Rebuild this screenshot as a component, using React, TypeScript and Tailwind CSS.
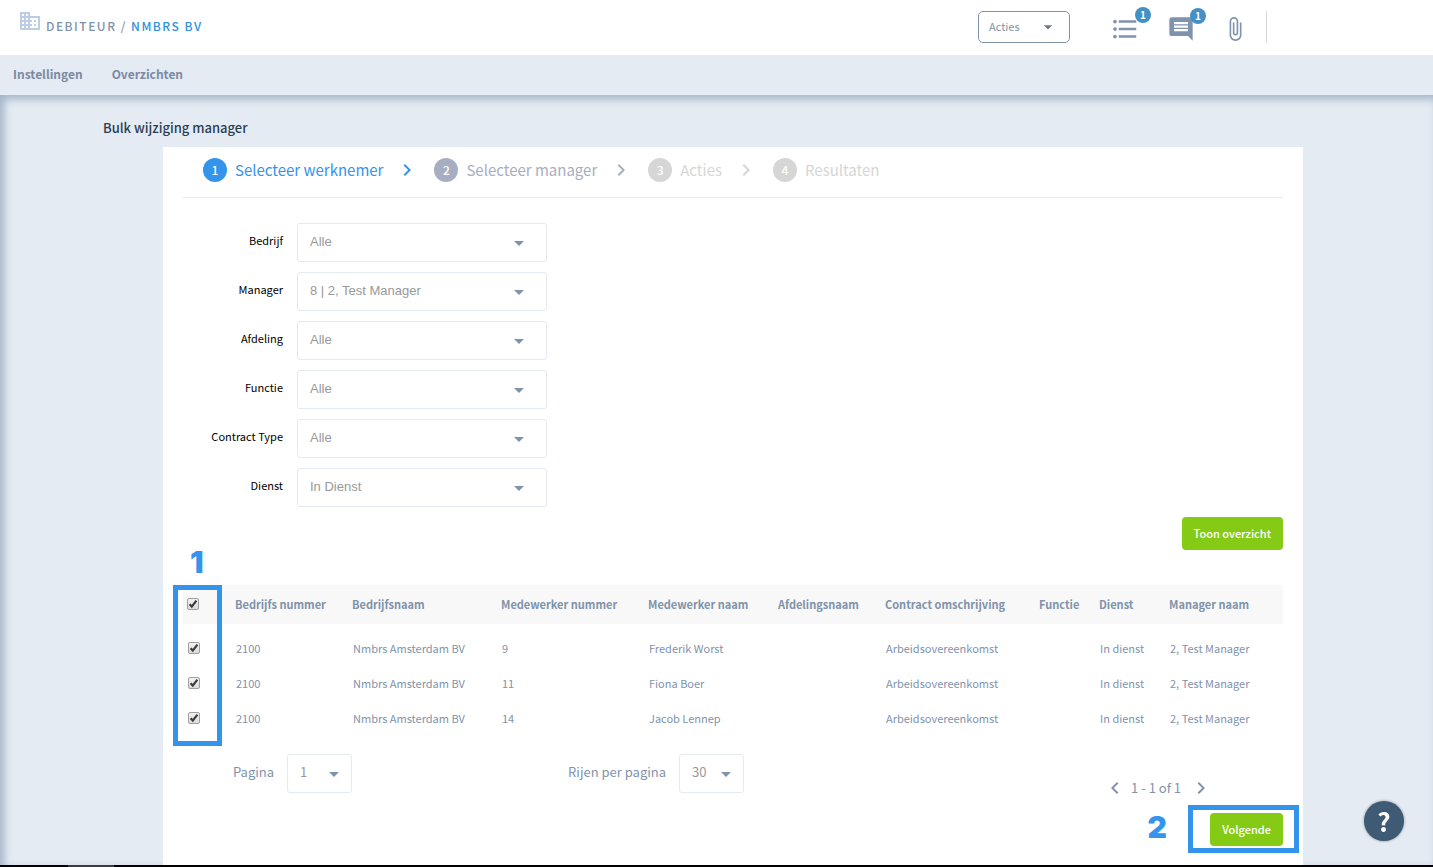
import React from "react";
import {
  MdArrowDropDown,
  MdAttachFile,
  MdBusiness,
  MdChevronLeft,
  MdChevronRight,
  MdComment,
  MdFormatListBulleted,
} from "react-icons/md";

const filters = [
  { id: "bedrijf", label: "Bedrijf", value: "Alle" },
  { id: "manager", label: "Manager", value: "8 | 2, Test Manager" },
  { id: "afdeling", label: "Afdeling", value: "Alle" },
  { id: "functie", label: "Functie", value: "Alle" },
  { id: "contract", label: "Contract Type", value: "Alle" },
  { id: "dienst", label: "Dienst", value: "In Dienst" },
];

const steps = [
  { label: "Selecteer werknemer", dot: "bg-[#3494eb]", text: "text-[#3494eb]" },
  { label: "Selecteer manager", dot: "bg-[#a7aec1]", text: "text-[#a7aec1]" },
  { label: "Acties", dot: "bg-[#d6d6d6]", text: "text-[#d6d6d6]" },
  { label: "Resultaten", dot: "bg-[#d6d6d6]", text: "text-[#d6d6d6]" },
];

const columns = [
  { label: "Bedrijfs nummer", width: "w-[117px]" },
  { label: "Bedrijfsnaam", width: "w-[149px]" },
  { label: "Medewerker nummer", width: "w-[147px]" },
  { label: "Medewerker naam", width: "w-[130px]" },
  { label: "Afdelingsnaam", width: "w-[107px]" },
  { label: "Contract omschrijving", width: "w-[154px]" },
  { label: "Functie", width: "w-[60px]" },
  { label: "Dienst", width: "w-[70px]" },
  { label: "Manager naam", width: "w-[114px]" },
];

const rows = [
  ["2100", "Nmbrs Amsterdam BV", "9", "Frederik Worst", "", "Arbeidsovereenkomst", "", "In dienst", "2, Test Manager"],
  ["2100", "Nmbrs Amsterdam BV", "11", "Fiona Boer", "", "Arbeidsovereenkomst", "", "In dienst", "2, Test Manager"],
  ["2100", "Nmbrs Amsterdam BV", "14", "Jacob Lennep", "", "Arbeidsovereenkomst", "", "In dienst", "2, Test Manager"],
];

function Tick({ label }: { label: string }) {
  return (
    <span className="relative block size-3">
      <input
        type="checkbox"
        defaultChecked
        aria-label={label}
        className="peer block size-3 appearance-none rounded-[2px] border border-[#a0a0a0] bg-linear-to-b from-[#f2f2f2] to-[#dcdcdc]"
      />
      <svg
        viewBox="0 0 12 12"
        aria-hidden="true"
        className="pointer-events-none absolute inset-0 hidden size-3 fill-none stroke-[#3c3c3c] peer-checked:block"
      >
        <path d="M2.6 6.2 4.8 8.6 9.4 2.6" strokeWidth="2.2" />
      </svg>
    </span>
  );
}

function Badge({ count }: { count: number }) {
  return (
    <span className="absolute -top-[7px] -right-[11px] flex size-4 items-center justify-center rounded-full bg-[#4390c4] text-[10px] leading-4 font-bold text-white">
      {count}
    </span>
  );
}

function PageSelect({ id, label, value }: { id: string; label: string; value: string }) {
  return (
    <div className="flex items-center">
      <label htmlFor={id} className="pb-[3px] text-[13px] leading-5">
        {label}
      </label>
      <span className="relative ml-[13px] block">
        <select
          id={id}
          className="block h-[39px] w-[65px] appearance-none rounded-[3px] border border-[#e4eaf3] bg-white pb-[3px] pl-3 text-[13px] text-[#999]"
        >
          <option>{value}</option>
        </select>
        <MdArrowDropDown className="pointer-events-none absolute top-2 right-[6px] size-6 text-[#7f93ae]" />
      </span>
    </div>
  );
}

export default function App() {
  return (
    <div className="flex min-h-screen flex-col bg-[#e4ebf3] font-['Noto_Sans_CJK_JP','Noto_Sans',sans-serif] text-[#7f93ab]">
      <header className="flex h-[55px] items-center justify-between bg-white pr-[166px] pb-[2px] pl-[18px]">
        <div className="flex items-center gap-1 pb-[2px]">
          <MdBusiness className="mb-[10px] size-6 text-[#bccde6]" />
          <a href="#debiteur" className="text-xs leading-5 font-medium tracking-[1.5px]">
            DEBITEUR / <span className="text-[#3090dc]">NMBRS BV</span>
          </a>
        </div>
        <div className="flex items-center">
          <span className="relative block">
            <select
              aria-label="Acties"
              className="block h-8 w-[92px] appearance-none rounded-[5px] border border-[#7f93ae] bg-white pl-[10px] text-[11px] text-[#7f93ab]"
            >
              <option>Acties</option>
            </select>
            <MdArrowDropDown className="pointer-events-none absolute top-[6px] right-3 size-5 text-[#6f7782]" />
          </span>
          <div className="flex items-center pt-1">
            <button type="button" aria-label="Taken" className="relative ml-10">
              <MdFormatListBulleted className="size-[30px] text-[#7f93ae]" />
              <Badge count={1} />
            </button>
            <button type="button" aria-label="Berichten" className="relative ml-[27px]">
              <MdComment className="size-7 text-[#7f93ae]" />
              <Badge count={1} />
            </button>
            <button type="button" aria-label="Bijlagen" className="ml-[27px]">
              <MdAttachFile className="size-[26px] text-[#7f93ae]" />
            </button>
          </div>
          <span className="ml-[18px] h-8 w-px bg-[#d8d8d8]" />
        </div>
      </header>

      <nav className="flex h-10 items-center gap-[29px] pb-[2px] pl-[13px] text-xs font-bold text-[#7a8aa4]">
        <a href="#instellingen">Instellingen</a>
        <a href="#overzichten">Overzichten</a>
      </nav>

      <main className="flex flex-1 flex-col pt-[23px] pr-[130px] pl-[103px] shadow-[inset_4px_4px_8px_#a3b3c6]">
        <h1 className="mb-[9px] text-[13px] leading-5 font-medium text-[#2c3e54]">Bulk wijziging manager</h1>

        <section className="ml-[60px] flex-1 bg-white px-5 pb-[19px]">
          <ol className="flex h-[51px] items-center border-b border-[#e4eaf3] pb-1 pl-5">
            {steps.map((step, i) => (
              <li key={step.label} className={`flex items-center ${step.text}`}>
                <span
                  className={`flex size-6 items-center justify-center rounded-full text-xs font-medium text-white ${step.dot}`}
                >
                  {i + 1}
                </span>
                <span className="ml-2 text-[15px] leading-6">{step.label}</span>
                {i < steps.length - 1 && <MdChevronRight className="mr-[15px] ml-3 size-6" />}
              </li>
            ))}
          </ol>

          <form className="mt-[25px] flex flex-col gap-[10px]">
            {filters.map((f) => (
              <div key={f.id} className="flex items-center gap-[14px]">
                <label htmlFor={f.id} className="w-[100px] pb-[5px] text-right text-[11px] leading-5 text-black">
                  {f.label}
                </label>
                <span className="relative block">
                  <select
                    id={f.id}
                    className="block h-[39px] w-[250px] appearance-none rounded-[3px] border border-[#e4eaf3] bg-white pb-px pl-3 font-['Liberation_Sans',sans-serif] text-[13px] text-[#999]"
                  >
                    <option>{f.value}</option>
                  </select>
                  <MdArrowDropDown className="pointer-events-none absolute top-2 right-4 size-6 text-[#7f93ae]" />
                </span>
              </div>
            ))}
            <button
              type="button"
              className="h-[33px] self-end rounded-[4px] bg-[#85ca14] px-3 text-[11px] font-medium text-white"
            >
              Toon overzicht
            </button>
          </form>

          <div className="relative mt-[35px]">
            <table className="w-full table-fixed text-left text-[11px]">
              <thead>
                <tr className="h-[39px] bg-[#f8f8f8]">
                  <th className="w-[52px] pb-[2px] pl-1">
                    <Tick label="Alles selecteren" />
                  </th>
                  {columns.map((c) => (
                    <th key={c.label} className={`font-bold whitespace-nowrap ${c.width}`}>
                      {c.label}
                    </th>
                  ))}
                </tr>
              </thead>
              <tbody className="before:block before:h-[7px]">
                {rows.map((row, r) => (
                  <tr key={r} className="h-[35px]">
                    <td className="pb-[2px] pl-[5px]">
                      <Tick label={`Selecteer ${row[3]}`} />
                    </td>
                    {row.map((cell, c) => (
                      <td key={c} className="pl-px whitespace-nowrap">
                        {cell}
                      </td>
                    ))}
                  </tr>
                ))}
              </tbody>
            </table>
            <div className="pointer-events-none absolute top-0 -left-[10px] h-[161px] w-[49px] border-5 border-[#3494eb]">
              <span className="absolute -top-12 left-3 font-['Inter',sans-serif] text-[30px] leading-10 font-black text-[#3494eb]">
                1
              </span>
            </div>
          </div>

          <div className="mt-[18px] flex items-start pl-[50px]">
            <PageSelect id="pagina" label="Pagina" value="1" />
            <div className="ml-[216px]">
              <PageSelect id="rijen" label="Rijen per pagina" value="30" />
            </div>
            <div className="mt-[22px] mr-[70px] ml-auto flex items-center">
              <button type="button" aria-label="Vorige pagina">
                <MdChevronLeft className="size-6" />
              </button>
              <span className="mr-2 ml-1 text-[13px] leading-5">1 - 1 of 1</span>
              <button type="button" aria-label="Volgende pagina">
                <MdChevronRight className="size-6" />
              </button>
            </div>
          </div>

          <div className="mt-[13px] flex justify-end">
            <div className="relative">
              <button
                type="button"
                className="block h-[33px] rounded-[4px] bg-[#85ca14] px-3 text-[11px] font-medium text-white"
              >
                Volgende
              </button>
              <div className="pointer-events-none absolute -top-2 -right-4 h-12 w-[111px] border-5 border-[#3494eb]">
                <span className="absolute -top-[3px] right-[127px] font-['Inter',sans-serif] text-[30px] leading-10 font-black text-[#3494eb]">
                  2
                </span>
              </div>
            </div>
          </div>
        </section>
      </main>

      <footer className="h-[2px] bg-black pl-[68px]">
        <div className="h-[2px] w-[46px] bg-[#3c3c3c]" />
      </footer>

      <button
        type="button"
        aria-label="Help"
        className="fixed right-[29px] bottom-[26px] flex size-10 items-center justify-center rounded-full bg-[#3e5a75] text-[26px] leading-10 font-bold text-white shadow-[0_0_3px_#00000066]"
      >
        ?
      </button>
    </div>
  );
}
